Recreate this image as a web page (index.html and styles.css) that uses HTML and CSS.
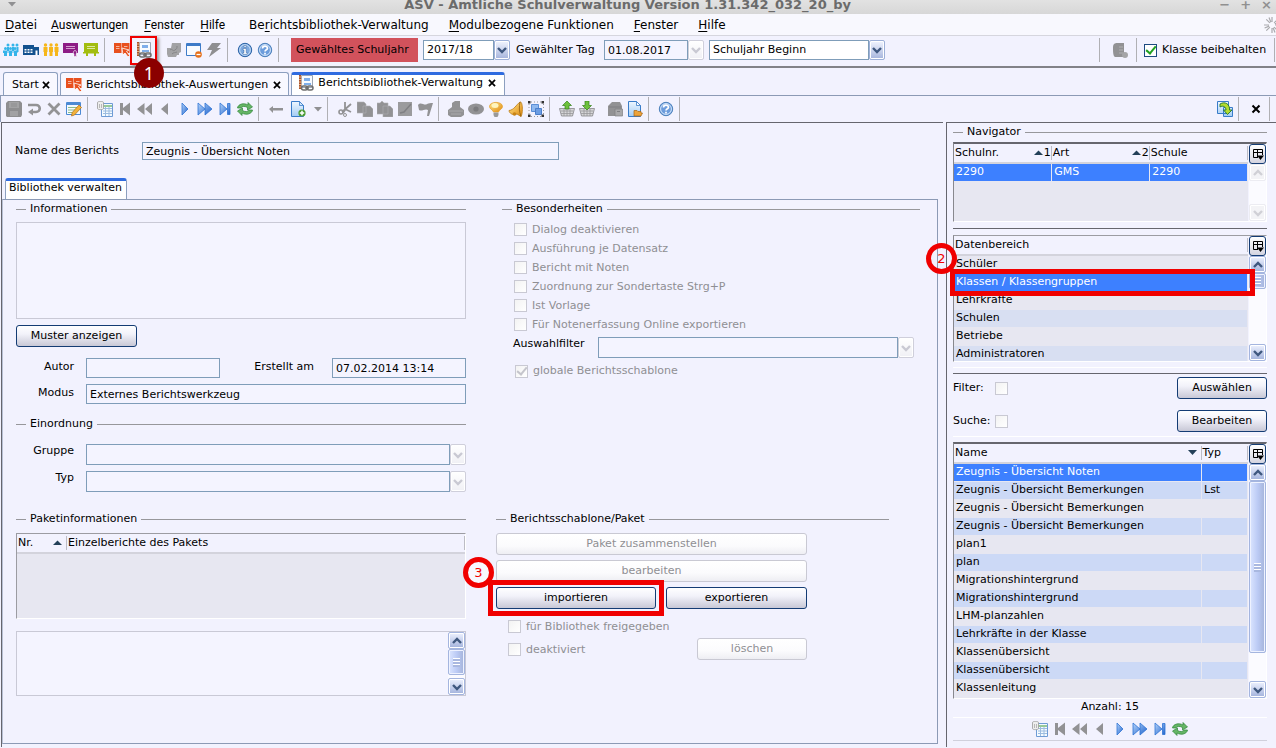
FILE: index.html
```html
<!DOCTYPE html>
<html lang="de">
<head>
<meta charset="utf-8">
<title>ASV - Amtliche Schulverwaltung</title>
<link rel="stylesheet" href="styles.css">
</head>
<body>
<svg class="sprite" aria-hidden="true">
  <defs>
    <linearGradient id="blueGrad" x1="0" y1="0" x2="1" y2="1"><stop offset="0" stop-color="#b5d4fa"/><stop offset="1" stop-color="#1f63cc"/></linearGradient>
    <linearGradient id="gold" x1="0" y1="0" x2="1" y2="1"><stop offset="0" stop-color="#ffe68a"/><stop offset="1" stop-color="#e08a10"/></linearGradient>
    <linearGradient id="pageGrad" x1="0" y1="0" x2="0" y2="1"><stop offset="0" stop-color="#eef7ff"/><stop offset="1" stop-color="#a3ccf4"/></linearGradient>
  </defs>
  <symbol id="people-blue" viewBox="0 0 16 16"><g fill="#35b4ea"><circle cx="5" cy="3" r="1.5"/><circle cx="10" cy="3" r="1.5"/><circle cx="14" cy="3" r="1.5"/><path d="M4 5h2v4h-2zM9 5h2v4h-2zM13.500 5h2v5h-2z"/><circle cx="2.500" cy="6.500" r="1.500"/><circle cx="7.500" cy="6.500" r="1.500"/><circle cx="12" cy="6.500" r="1.500"/><path d="M0 8.500h4.500v2.500H4v3H1v-3H0zM5.500 8.500H9.500v2.500H9v3H6v-3h-.5zM10.500 8.500h4v2.500H14v3h-3v-3h-.5z"/></g></symbol>
  <symbol id="school" viewBox="0 0 16 16"><path fill="#12518f" d="M0 3h11v2h5v8H0z"/><path fill="#fff" d="M1.500 7h2v1.500h-2zM4.500 7h2v1.500h-2zM7.500 7h2v1.500h-2zM1.500 9.500h2V11h-2zM4.500 9.500h2V11h-2zM7.500 9.500h2V11h-2zM12.500 8.500h2V13h-2z"/></symbol>
  <symbol id="people-gold" viewBox="0 0 16 16"><g fill="#f6b61a"><circle cx="2.500" cy="3" r="1.700"/><circle cx="8" cy="3" r="1.700"/><circle cx="13.500" cy="3" r="1.700"/><path d="M.5 5h4v5H4v4H1v-4H.5zM6 5h4v5h-.5v4h-3v-4H6zM11.500 5h4v5H15v4h-3v-4h-.5z"/></g></symbol>
  <symbol id="cert" viewBox="0 0 16 16"><path fill="#8d1c86" d="M0 1h15v10H0z"/><path stroke="#e6c4e4" stroke-width=".8" d="M3 4.500h9M3 6.500h9"/><path fill="#8d1c86" stroke="#fff" stroke-width=".6" d="M12 8.500a2 2 0 0 1 1 3.500l1 3-1.700-1-1.300 1v-3a2 2 0 0 1 1-3.500z"/></symbol>
  <symbol id="board" viewBox="0 0 16 16"><path fill="#a2bd10" d="M1 1h14v9H1zM0 10h16v1.500H0zM3 11h2v3H3zM11 11h2v3h-2z"/><path stroke="#edf3c6" stroke-width=".8" d="M4 4.500h8M4 6.500h8"/></symbol>
  <symbol id="book" viewBox="0 0 16 16"><path fill="#e8501e" d="M0 1h7.500v10H0zM8 1h7.500v10H8z"/><path stroke="#f9d2c4" stroke-width=".8" d="M2 4.500h3.500M2 6.500h3.500M10 4.500h3.500"/><path fill="#e8501e" stroke="#fff" stroke-width=".8" d="M8 6l7 2-2.500 1.300 3 4.200-1.500 1.500-3-4L9 13z"/></symbol>
  <symbol id="report" viewBox="0 0 16 16"><path fill="#f8fbff" stroke="#9aa5b4" d="M3.500.5h11v12h-11z"/><path fill="#a9502a" d="M1 0h2v14H1z"/><path stroke="#e4b186" d="M1 2h3M1 4.500h3M1 7h3M1 9.500h3M1 12h3"/><path fill="#7faeea" d="M6 3h6v3H6zM6 8h7v2H6z"/><g fill="none" stroke="#6d6d6d" stroke-width="1.500"><rect x="3.500" y="11" width="6" height="4" rx="2"/><rect x="9" y="11" width="6" height="4" rx="2"/><path d="M7 13h4"/></g></symbol>
  <symbol id="puzzle" viewBox="0 0 16 16"><path fill="#a2a2a4" d="M6 1h9v9l-2 1v2h-2l-1 2H2l-1-3V6h4z"/><path fill="none" stroke="#858587" d="M4 8c2-2 3 2 5 0s2-1 2-4M6 12c2-2 3-1 5-2"/></symbol>
  <symbol id="window" viewBox="0 0 16 16"><path fill="#f8fbff" stroke="#3d7bc8" d="M.5 1.500h14v12H.5z"/><path fill="#3d7bc8" d="M1 2h13v2H1z"/><circle cx="12.500" cy="12.500" r="3.300" fill="#e5701b"/><path stroke="#fff" stroke-width="1.300" d="M10.500 12.500h4"/></symbol>
  <symbol id="bolt" viewBox="0 0 16 16"><path fill="#8f8f91" d="M6 1h9l-4 5h4L3 15l3-7H1z"/></symbol>
  <symbol id="info" viewBox="0 0 16 16"><circle cx="8" cy="8" r="6.700" fill="#7eaae0" stroke="#2b62a5"/><circle cx="8" cy="8" r="5.300" fill="none" stroke="#d7e8fb" stroke-width=".8"/><path fill="#fff" stroke="#1c4c91" stroke-width=".4" d="M7 3.500h2.200v1.800H7zM6 6.500h3.200v4.200h1v1.600H6v-1.600h1V8H6z"/></symbol>
  <symbol id="help" viewBox="0 0 16 16"><circle cx="8" cy="8" r="6.700" fill="#6c9cdc" stroke="#4d81bb"/><circle cx="8" cy="8" r="5.400" fill="none" stroke="#d7e8fb"/><path fill="none" stroke="#fff" stroke-width="1.700" d="M5.500 6.500c0-3 5-3 5-.3 0 1.500-2.500 1.500-2.500 3.300M8 10.800v1.600"/></symbol>
  <symbol id="save" viewBox="0 0 16 16"><path fill="#8e8e90" d="M2 0h12l2 2v12l-1 2H1l-1-1V2z"/><path fill="#a2a2a4" d="M3 1h10v6H3zM4 10h8v5H4z"/><path stroke="#8e8e90" d="M5 3h6M5 5h6"/></symbol>
  <symbol id="undo" viewBox="0 0 16 16"><path fill="none" stroke="#929294" stroke-width="2.600" d="M2 4h8c5 0 5 7 0 7H6"/><path fill="#929294" d="M7 7.500v7L2 11z"/></symbol>
  <symbol id="cross" viewBox="0 0 16 16"><path stroke="#939395" stroke-width="2.800" d="M2.500 2.500l11 11M13.500 2.500l-11 11"/></symbol>
  <symbol id="edit" viewBox="0 0 16 16"><path fill="#f4f9ff" stroke="#4c8ad4" d="M.5 1.500h14v12H.5z"/><path fill="#4c8ad4" d="M1 2h13v2H1z"/><path stroke="#8bbd8a" d="M2 6.500h9M2 9h7M2 11.500h5"/><path fill="#f3b33a" stroke="#ad6c18" stroke-width=".7" d="M13 4l2.500 2.500-7 7.500-3 1 .7-3.500z"/></symbol>
  <symbol id="table" viewBox="0 0 16 16"><path fill="#f4faff" stroke="#6e9bd5" d="M4.500 2.500h11v13h-11z"/><path stroke="#78b878" stroke-width="1.500" d="M6 5h9"/><path stroke="#9cbce0" d="M6 7.500h9M6 10h9M6 12.500h9M8.500 6v9M12 6v9"/><path fill="#eee" stroke="#999" stroke-width=".8" d="M.5 1.500c0-1.500 6-1.500 6 0v6c0 1.500-6 1.500-6 0z"/><path stroke="#aaa" stroke-width=".8" d="M2.500 3v4M4.500 3v4"/></symbol>
  <symbol id="first" viewBox="0 0 16 16"><path fill="#929294" d="M3 2h3v5l7-5.500v13L6 9v5H3z"/></symbol>
  <symbol id="rewind" viewBox="0 0 16 16"><path fill="#929294" d="M7.500 2v12L0 8zM15 2v12L8 8z"/></symbol>
  <symbol id="prev" viewBox="0 0 16 16"><path fill="#929294" d="M11 2v12L4 8z"/></symbol>
  <symbol id="next" viewBox="0 0 16 16"><path fill="url(#blueGrad)" stroke="#2f74d4" stroke-width=".8" d="M5 2v12l6-6z"/></symbol>
  <symbol id="forward" viewBox="0 0 16 16"><path fill="url(#blueGrad)" stroke="#2f74d4" stroke-width=".8" d="M1 2v12l7-6zM8 2v12l7-6z"/></symbol>
  <symbol id="last" viewBox="0 0 16 16"><path fill="url(#blueGrad)" stroke="#2f74d4" stroke-width=".8" d="M3 2v12l7-6zM10.500 2.500h2.500v11h-2.500z"/></symbol>
  <symbol id="refresh" viewBox="0 0 16 16"><path fill="#65b565" stroke="#2d8436" stroke-width=".7" d="M.5 7C1 3 7 1.500 11 4V1.500L15.500 6l-5 3V6.500C8 5 5 5 4 7zM15.500 9c-.5 4-6.500 5.500-10.500 3v2.500L.5 10l5-3v2.500C8 11 11 11 12 9z"/></symbol>
  <symbol id="back" viewBox="0 0 16 16"><path fill="#929294" d="M1 8l4-3v2h10v2.500H5V12z"/></symbol>
  <symbol id="newdoc" viewBox="0 0 16 16"><path fill="url(#pageGrad)" stroke="#397cc9" d="M1.500.5h8l4 4v11h-12z"/><path fill="#cfe5fb" stroke="#397cc9" stroke-width=".8" d="M9.500.5v4h4z"/><circle cx="12" cy="12" r="3.600" fill="#4a9c31"/><path stroke="#fff" stroke-width="1.500" d="M9.800 12h4.400M12 9.800v4.400"/></symbol>
  <symbol id="down" viewBox="0 0 16 16"><path fill="#909092" d="M4 6h8L8 10.500z"/></symbol>
  <symbol id="scissors" viewBox="0 0 16 16"><path fill="none" stroke="#929294" stroke-width="1.800" d="M8 1v8l-2 3M14 3L5 11M8 8l6 3"/><circle cx="4" cy="11" r="2" fill="none" stroke="#929294" stroke-width="1.600"/><circle cx="8" cy="14" r="1.500" fill="none" stroke="#929294"/></symbol>
  <symbol id="copy" viewBox="0 0 16 16"><path fill="#929294" stroke="#b0b0b2" stroke-width=".6" d="M0 1h7l2 2v9H0zM6 5h7l3 3v8H6z"/></symbol>
  <symbol id="paste" viewBox="0 0 16 16"><path fill="#929294" stroke="#b0b0b2" stroke-width=".6" d="M0 2h3l2-2 2 2h4v11H0zM6 5h7l3 3v8H6z"/></symbol>
  <symbol id="editgray" viewBox="0 0 16 16"><path fill="#9b9b9d" d="M1 1h14v14H1z"/><path fill="none" stroke="#808083" stroke-width="1.500" d="M3 12l4-1 7-8"/></symbol>
  <symbol id="flag" viewBox="0 0 16 16"><path fill="#929294" d="M1 4c3-4 6 1 9-1 2-1 3-1 6-1l-4 13h-2l1-6c-3-2-6 2-9 0z"/></symbol>
  <symbol id="printer" viewBox="0 0 16 16"><path fill="#929294" d="M4 6V2l3-2h5v6l4 3v5l-3 2H3l-3-2V9z"/><path stroke="#a9a9ab" d="M1 10h14M3 13h10"/></symbol>
  <symbol id="eye" viewBox="0 0 16 16"><ellipse cx="8" cy="8" rx="8" ry="5.600" fill="#929294"/><circle cx="8" cy="8" r="2.600" fill="#7b7b7d"/></symbol>
  <symbol id="bulb" viewBox="0 0 16 16"><path fill="url(#gold)" stroke="#e29b20" stroke-width=".7" d="M5.500 11C5 9 1.500 8 1.500 5.500 1.500 0 14.500 0 14.500 5.500 14.500 8 11 9 10.500 11z"/><ellipse cx="7" cy="4.500" rx="3.500" ry="2.500" fill="#fff5bd"/><path fill="#999" d="M5.500 11.500h5V14l-1 2h-3l-1-2z"/></symbol>
  <symbol id="bell" viewBox="0 0 16 16"><path fill="url(#gold)" stroke="#b97912" stroke-width=".8" d="M12 1c3-1 3 12 1 14.500L9 13c-4 2-8-1-8-3.500C6 9 8 4 12 1z"/><path fill="none" stroke="#8b5a0c" stroke-width=".8" d="M12 1c-1 5-1 9 1 14.500"/><circle cx="6.500" cy="13" r="1.800" fill="#c88416"/></symbol>
  <symbol id="group" viewBox="0 0 16 16"><path fill="#8fb9ef" stroke="#5a8ed6" d="M3.500 3.500h7v7h-7z"/><path fill="#6c9de3" stroke="#4a7fcb" d="M7.500 7.500h6v6h-6z"/><path stroke="#999" stroke-dasharray="1 2" d="M3 1h10M3 15.500h10M1 3v10M15.500 3v10"/><path fill="#333" d="M0 0h2.500v2.500H0zM13.500 0H16v2.500h-2.500zM0 13.500h2.500V16H0zM13.500 13.500H16V16h-2.500z"/></symbol>
  <symbol id="basket-up" viewBox="0 0 16 16"><path fill="#d6d6d8" stroke="#858588" stroke-width=".8" d="M.5 7.500h15l-2 7.500h-11z"/><path stroke="#98989b" stroke-width=".8" d="M2 10h12M2 12.500h12M5 8v7M8 8v7M11 8v7"/><path fill="#6dc13c" stroke="#35811b" stroke-width=".7" d="M8 0l4.500 4.500h-2.500V8H6V4.500H3.500z"/></symbol>
  <symbol id="basket-down" viewBox="0 0 16 16"><path fill="#d6d6d8" stroke="#858588" stroke-width=".8" d="M.5 7.500h15l-2 7.500h-11z"/><path stroke="#98989b" stroke-width=".8" d="M2 10h12M2 12.500h12M5 8v7M8 8v7M11 8v7"/><path fill="#6dc13c" stroke="#35811b" stroke-width=".7" d="M8 9l4.500-4.500h-2.500V0H6v4.500H3.500z"/></symbol>
  <symbol id="cabinet" viewBox="0 0 16 16"><path fill="#929294" d="M1 5l4-4h8l2 4v10H1z"/><path fill="#a8a8aa" stroke="#7f7f82" stroke-width=".7" d="M8 8h7.500v7H8z"/><path stroke="#7f7f82" d="M2 6h12M10 10.500h3"/></symbol>
  <symbol id="docfolder" viewBox="0 0 16 16"><path fill="url(#pageGrad)" stroke="#397cc9" d="M1.500.5h8l4 4v11h-12z"/><path fill="#fff" stroke="#397cc9" stroke-width=".8" d="M9.500.5v4h4z"/><path fill="#eda33a" stroke="#a86616" stroke-width=".7" d="M7 15V9.500h3l1 1h3v1.500h1.500L14 15z"/></symbol>
  <symbol id="swap" viewBox="0 0 16 16"><path fill="url(#pageGrad)" stroke="#397cc9" d="M.5.5h11v12H.5zM6.500 6.500h9v9h-9z"/><path fill="#b4dc2e" stroke="#23762e" stroke-width=".9" d="M3 3c5-3 10 0 9.500 6H15l-4.500 4.500L6.500 9H9c0-3-3-5-6-3z"/></symbol>
  <symbol id="building" viewBox="0 0 16 16"><path fill="#929294" d="M1 5c0-4 3-4 5-4h6v14H3c-2-1-2-5-2-10z"/><path stroke="#b0b0b2" d="M7 5h4M7 8h4M7 11h4"/><circle cx="13" cy="13" r="3" fill="#a5a5a7"/></symbol>
  <symbol id="close" viewBox="0 0 16 16"><path stroke="#000" stroke-width="2" d="M4.500 4.500l7 7M11.500 4.500l-7 7"/></symbol>
  <symbol id="chev-down" viewBox="0 0 12 12"><path fill="none" stroke="currentColor" stroke-width="2.400" d="M2 4l4 4 4-4"/></symbol>
  <symbol id="chev-up" viewBox="0 0 12 12"><path fill="none" stroke="currentColor" stroke-width="2.400" d="M2 8l4-4 4 4"/></symbol>
  <symbol id="sort-up" viewBox="0 0 9 6"><path fill="#234058" d="M0 5h9L4.500.5z"/></symbol>
  <symbol id="sort-down" viewBox="0 0 9 6"><path fill="#234058" d="M0 0h9L4.500 5z"/></symbol>
  <symbol id="colctl" viewBox="0 0 12 12"><path fill="none" stroke="#000" d="M10.500 7V1.500h-9v8H6M1 4.500h10M5.500 1v8"/><path fill="#000" d="M5 7.500h7L8.500 12z"/></symbol>
  <symbol id="spinner" viewBox="0 0 16 16"><path stroke="#aaaaae" stroke-width="1.200" d="M8 0v5M8 11v5M0 8h5M11 8h5M2.300 2.300l3.600 3.600M10.100 10.100l3.600 3.600M2.300 13.700l3.600-3.600M10.100 5.900l3.600-3.600M5 .6l1.900 4.600M9.100 10.800l1.900 4.600M.6 11l4.600-1.900M10.800 6.900l4.600-1.900"/></symbol>
</svg>

<header class="titlebar">
  <svg class="title-menu"><use href="#down"/></svg>
  <h1>ASV - Amtliche Schulverwaltung Version 1.31.342_032_20_by</h1>
  <div class="window-controls" aria-hidden="true"><span>−</span><span>+</span><span>×</span></div>
</header>

<nav class="menubar">
  <a href="#"><u>D</u>atei</a>
  <span class="menu-alt"><a href="#"><u>A</u>uswertungen</a><a href="#"><u>F</u>enster</a><a href="#"><u>H</u>ilfe</a></span>
  <a href="#">Be<u>r</u>ichtsbibliothek-Verwaltung</a>
  <a href="#"><u>M</u>odulbezogene Funktionen</a>
  <a href="#"><u>F</u>enster</a>
  <a href="#"><u>H</u>ilfe</a>
  <svg class="spinner"><use href="#spinner"/></svg>
</nav>

<div class="toolbar main-toolbar">
  <button class="tool" aria-label="Schüler"><svg><use href="#people-blue"/></svg></button>
  <button class="tool" aria-label="Schulen"><svg><use href="#school"/></svg></button>
  <button class="tool" aria-label="Klassen"><svg><use href="#people-gold"/></svg></button>
  <button class="tool" aria-label="Zeugnisse"><svg><use href="#cert"/></svg></button>
  <button class="tool" aria-label="Unterricht"><svg><use href="#board"/></svg></button>
  <i class="sep"></i>
  <button class="tool" aria-label="Auswertungen"><svg><use href="#book"/></svg></button>
  <span class="marked-tool"><button class="tool" aria-label="Berichtsbibliothek"><svg><use href="#report"/></svg></button><b class="step-one">1</b></span>
  <button class="tool" aria-label="Module"><svg><use href="#puzzle"/></svg></button>
  <button class="tool" aria-label="Fenster schließen"><svg><use href="#window"/></svg></button>
  <button class="tool" aria-label="Schnellzugriff"><svg><use href="#bolt"/></svg></button>
  <i class="sep"></i>
  <button class="tool" aria-label="Info"><svg><use href="#info"/></svg></button>
  <button class="tool" aria-label="Hilfe"><svg><use href="#help"/></svg></button>
  <i class="sep"></i>
  <label class="year-label" for="year">Gewähltes Schuljahr</label>
  <span class="combo year"><select id="year"><option>2017/18</option></select><span class="arrow"><svg><use href="#chev-down"/></svg></span></span>
  <label class="day-label" for="day">Gewählter Tag</label>
  <span class="combo day off"><input id="day" value="01.08.2017" readonly><span class="arrow"><svg><use href="#chev-down"/></svg></span></span>
  <span class="combo period"><select aria-label="Zeitpunkt"><option>Schuljahr Beginn</option></select><span class="arrow"><svg><use href="#chev-down"/></svg></span></span>
  <span class="toolbar-end">
    <i class="sep"></i>
    <button class="tool roomy" aria-label="Ablage"><svg><use href="#building"/></svg></button>
    <i class="sep"></i>
    <label class="check keep"><input type="checkbox" checked>Klasse beibehalten</label>
    <i class="sep last"></i>
  </span>
</div>

<div class="tabs">
  <div class="tab">Start<button class="tab-close" aria-label="Schließen"><svg><use href="#close"/></svg></button></div>
  <div class="tab"><svg class="tab-icon"><use href="#book"/></svg>Berichtsbibliothek-Auswertungen<button class="tab-close" aria-label="Schließen"><svg><use href="#close"/></svg></button></div>
  <div class="tab active"><svg class="tab-icon"><use href="#report"/></svg>Berichtsbibliothek-Verwaltung<button class="tab-close" aria-label="Schließen"><svg><use href="#close"/></svg></button></div>
</div>

<div class="toolbar edit-toolbar">
  <button class="tool" aria-label="Speichern"><svg><use href="#save"/></svg></button>
  <button class="tool" aria-label="Rückgängig"><svg><use href="#undo"/></svg></button>
  <button class="tool" aria-label="Löschen"><svg><use href="#cross"/></svg></button>
  <button class="tool" aria-label="Ändern"><svg><use href="#edit"/></svg></button>
  <i class="sep"></i>
  <button class="tool" aria-label="Tabelle"><svg><use href="#table"/></svg></button>
  <button class="tool" aria-label="Erster"><svg><use href="#first"/></svg></button>
  <button class="tool" aria-label="Zurück blättern"><svg><use href="#rewind"/></svg></button>
  <button class="tool" aria-label="Voriger"><svg><use href="#prev"/></svg></button>
  <button class="tool" aria-label="Nächster"><svg><use href="#next"/></svg></button>
  <button class="tool" aria-label="Vor blättern"><svg><use href="#forward"/></svg></button>
  <button class="tool" aria-label="Letzter"><svg><use href="#last"/></svg></button>
  <button class="tool" aria-label="Aktualisieren"><svg><use href="#refresh"/></svg></button>
  <i class="sep"></i>
  <button class="tool" aria-label="Zurück"><svg><use href="#back"/></svg></button>
  <button class="tool wide" aria-label="Neu"><svg><use href="#newdoc"/></svg></button>
  <button class="tool slim" aria-label="Neu, Auswahl"><svg><use href="#down"/></svg></button>
  <i class="sep"></i>
  <button class="tool" aria-label="Ausschneiden"><svg><use href="#scissors"/></svg></button>
  <button class="tool" aria-label="Kopieren"><svg><use href="#copy"/></svg></button>
  <button class="tool" aria-label="Einfügen"><svg><use href="#paste"/></svg></button>
  <button class="tool" aria-label="Bearbeiten"><svg><use href="#editgray"/></svg></button>
  <button class="tool" aria-label="Markieren"><svg><use href="#flag"/></svg></button>
  <i class="sep"></i>
  <button class="tool" aria-label="Drucken"><svg><use href="#printer"/></svg></button>
  <button class="tool" aria-label="Vorschau"><svg><use href="#eye"/></svg></button>
  <button class="tool" aria-label="Hinweis"><svg><use href="#bulb"/></svg></button>
  <button class="tool" aria-label="Erinnerung"><svg><use href="#bell"/></svg></button>
  <button class="tool" aria-label="Gruppieren"><svg><use href="#group"/></svg></button>
  <i class="sep"></i>
  <button class="tool" aria-label="Aus Korb"><svg><use href="#basket-up"/></svg></button>
  <button class="tool" aria-label="In Korb"><svg><use href="#basket-down"/></svg></button>
  <button class="tool spaced" aria-label="Archiv"><svg><use href="#cabinet"/></svg></button>
  <button class="tool" aria-label="Öffnen"><svg><use href="#docfolder"/></svg></button>
  <i class="sep"></i>
  <button class="tool" aria-label="Hilfe"><svg><use href="#help"/></svg></button>
  <i class="sep"></i>
  <span class="toolbar-end">
    <button class="tool" aria-label="Wechseln"><svg><use href="#swap"/></svg></button>
    <i class="sep"></i>
    <button class="tool" aria-label="Schließen"><svg><use href="#close"/></svg></button>
    <i class="sep last"></i>
  </span>
</div>

<main class="workspace">
  <section class="editor">
    <div class="name-row">
      <label for="name">Name des Berichts</label>
      <input class="field" id="name" value="Zeugnis - Übersicht Noten" readonly>
    </div>
    <div class="inner-tabs"><button class="inner-tab">Bibliothek verwalten</button></div>
    <div class="panel">
      <div class="column">
        <h2 class="section">Informationen</h2>
        <textarea class="info-text" aria-label="Informationen" readonly></textarea>
        <button class="btn sample">Muster anzeigen</button>
        <div class="form-row">
          <label for="author">Autor</label><input class="field" id="author" readonly>
          <label class="created-label" for="created">Erstellt am</label><input class="field" id="created" value="07.02.2014 13:14" readonly>
        </div>
        <div class="form-row full">
          <label for="mode">Modus</label><input class="field" id="mode" value="Externes Berichtswerkzeug" readonly>
        </div>
        <h2 class="section sorting">Einordnung</h2>
        <div class="form-row full">
          <label for="grp">Gruppe</label><span class="combo off"><select id="grp" disabled></select><span class="arrow"><svg><use href="#chev-down"/></svg></span></span>
        </div>
        <div class="form-row full">
          <label for="typ">Typ</label><span class="combo off"><select id="typ" disabled></select><span class="arrow"><svg><use href="#chev-down"/></svg></span></span>
        </div>
        <h2 class="section package">Paketinformationen</h2>
        <div class="grid-box package-box">
          <table class="grid">
            <colgroup><col class="col-nr"><col></colgroup>
            <thead><tr><th><span>Nr.<svg class="sort"><use href="#sort-up"/></svg></span></th><th><span>Einzelberichte des Pakets</span></th></tr></thead>
          </table>
        </div>
        <div class="note-box">
          <textarea aria-label="Bemerkung" readonly></textarea>
          <div class="scroll"><button aria-label="Nach oben"><svg><use href="#chev-up"/></svg></button><span class="thumb short"></span><button class="end" aria-label="Nach unten"><svg><use href="#chev-down"/></svg></button></div>
        </div>
      </div>
      <div class="column">
        <div class="specials">
          <h2 class="section">Besonderheiten</h2>
          <div class="checks">
            <label class="check"><input type="checkbox" disabled>Dialog deaktivieren</label>
            <label class="check"><input type="checkbox" disabled>Ausführung je Datensatz</label>
            <label class="check"><input type="checkbox" disabled>Bericht mit Noten</label>
            <label class="check"><input type="checkbox" disabled>Zuordnung zur Sondertaste Strg+P</label>
            <label class="check"><input type="checkbox" disabled>Ist Vorlage</label>
            <label class="check"><input type="checkbox" disabled>Für Notenerfassung Online exportieren</label>
          </div>
          <div class="filter-row"><label for="sel">Auswahlfilter</label><span class="combo off"><select id="sel" disabled></select><span class="arrow"><svg><use href="#chev-down"/></svg></span></span></div>
          <label class="check global"><input type="checkbox" checked disabled>globale Berichtsschablone</label>
        </div>
        <div class="template">
          <h2 class="section">Berichtsschablone/Paket</h2>
          <div class="actions">
            <button class="btn span" disabled>Paket zusammenstellen</button>
            <button class="btn span" disabled>bearbeiten</button>
            <span class="marked-import"><button class="btn">importieren</button><b class="step">3</b></span>
            <button class="btn">exportieren</button>
          </div>
          <div class="release">
            <div class="checks">
              <label class="check"><input type="checkbox" disabled>für Bibliothek freigegeben</label>
              <label class="check"><input type="checkbox" disabled>deaktiviert</label>
            </div>
            <button class="btn delete" disabled>löschen</button>
          </div>
        </div>
      </div>
    </div>
  </section>

  <aside class="navigator">
    <h2 class="section">Navigator</h2>
    <div class="list school-list">
      <div class="grid-box">
        <table class="grid">
          <colgroup><col><col><col></colgroup>
          <thead><tr><th><span>Schulnr.<span class="order"><svg class="sort"><use href="#sort-up"/></svg>1</span></span></th><th><span>Art<span class="order"><svg class="sort"><use href="#sort-up"/></svg>2</span></span></th><th><span>Schule</span></th></tr></thead>
          <tbody><tr class="sel"><td>2290</td><td>GMS</td><td>2290</td></tr></tbody>
        </table>
      </div>
      <div class="rail"><button class="colctl" aria-label="Spalten"><svg><use href="#colctl"/></svg></button><div class="scroll off"><button disabled aria-label="Nach oben"><svg><use href="#chev-up"/></svg></button><button class="end" disabled aria-label="Nach unten"><svg><use href="#chev-down"/></svg></button></div></div>
    </div>
    <div class="area-frame">
      <div class="list area-list">
        <div class="grid-box">
          <table class="grid">
            <thead><tr><th><span>Datenbereich</span></th></tr></thead>
            <tbody>
              <tr><td>Schüler</td></tr>
              <tr class="sel"><td>Klassen / Klassengruppen</td></tr>
              <tr><td>Lehrkräfte</td></tr>
              <tr><td>Schulen</td></tr>
              <tr><td>Betriebe</td></tr>
              <tr><td>Administratoren</td></tr>
            </tbody>
          </table>
        </div>
        <div class="rail"><button class="colctl" aria-label="Spalten"><svg><use href="#colctl"/></svg></button><div class="scroll"><button aria-label="Nach oben"><svg><use href="#chev-up"/></svg></button><span class="thumb tiny"></span><button class="end" aria-label="Nach unten"><svg><use href="#chev-down"/></svg></button></div></div>
      </div>
      <div class="row-mark"><b class="step">2</b></div>
    </div>
    <div class="filters">
      <div class="filter-line"><label for="flt">Filter:</label><input id="flt" type="checkbox" disabled><button class="btn">Auswählen</button></div>
      <div class="filter-line"><label for="sch">Suche:</label><input id="sch" type="checkbox" disabled><button class="btn">Bearbeiten</button></div>
    </div>
    <div class="list name-list">
      <div class="grid-box">
        <table class="grid">
          <colgroup><col><col class="col-typ"></colgroup>
          <thead><tr><th><span>Name<svg class="sort"><use href="#sort-down"/></svg></span></th><th><span>Typ</span></th></tr></thead>
          <tbody>
            <tr class="sel"><td>Zeugnis - Übersicht Noten</td><td></td></tr>
            <tr><td>Zeugnis - Übersicht Bemerkungen</td><td>Lst</td></tr>
            <tr><td>Zeugnis - Übersicht Bemerkungen</td><td></td></tr>
            <tr><td>Zeugnis - Übersicht Bemerkungen</td><td></td></tr>
            <tr><td>plan1</td><td></td></tr>
            <tr><td>plan</td><td></td></tr>
            <tr><td>Migrationshintergrund</td><td></td></tr>
            <tr><td>Migrationshintergrund</td><td></td></tr>
            <tr><td>LHM-planzahlen</td><td></td></tr>
            <tr><td>Lehrkräfte in der Klasse</td><td></td></tr>
            <tr><td>Klassenübersicht</td><td></td></tr>
            <tr><td>Klassenübersicht</td><td></td></tr>
            <tr><td>Klassenleitung</td><td></td></tr>
          </tbody>
        </table>
      </div>
      <div class="rail"><button class="colctl" aria-label="Spalten"><svg><use href="#colctl"/></svg></button><div class="scroll"><button aria-label="Nach oben"><svg><use href="#chev-up"/></svg></button><span class="thumb tall"></span><button class="end" aria-label="Nach unten"><svg><use href="#chev-down"/></svg></button></div></div>
    </div>
    <p class="count">Anzahl: 15</p>
    <div class="pager">
      <button class="tool" aria-label="Tabelle"><svg><use href="#table"/></svg></button>
      <button class="tool" aria-label="Erster"><svg><use href="#first"/></svg></button>
      <button class="tool" aria-label="Zurück blättern"><svg><use href="#rewind"/></svg></button>
      <button class="tool" aria-label="Voriger"><svg><use href="#prev"/></svg></button>
      <button class="tool" aria-label="Nächster"><svg><use href="#next"/></svg></button>
      <button class="tool" aria-label="Vor blättern"><svg><use href="#forward"/></svg></button>
      <button class="tool" aria-label="Letzter"><svg><use href="#last"/></svg></button>
      <button class="tool" aria-label="Aktualisieren"><svg><use href="#refresh"/></svg></button>
    </div>
  </aside>
</main>
</body>
</html>
```
FILE: styles.css
```css
* { box-sizing: border-box; }
body {
  margin: 0;
  min-height: 100vh;
  display: flex;
  flex-direction: column;
  background: #f2f2fe;
  color: #000;
  font: 11px/14px "DejaVu Sans", sans-serif;
}
button, input, select, textarea { font: inherit; color: inherit; margin: 0; }
h1, h2, p { margin: 0; font: inherit; }
.sprite { position: absolute; width: 0; height: 0; }

/* Title and menu */
.titlebar {
  height: 14px;
  display: flex;
  align-items: center;
  justify-content: space-between;
  padding: 0 4px;
  overflow: hidden;
  background: linear-gradient(#e2e2e2, #d7d7d7);
  color: #6b6b6b;
}
.titlebar h1 { font-size: 13px; font-weight: bold; line-height: 14px; margin-bottom: 5px; padding-left: 16px; }
.title-menu { width: 16px; height: 16px; margin-bottom: 6px; }
.window-controls { display: flex; gap: 10px; font-size: 13px; font-weight: bold; line-height: 14px; margin-bottom: 5px; color: #909090; }
.menubar {
  height: 22px;
  display: flex;
  align-items: center;
  gap: 20px;
  padding-left: 5px;
  background: #f8f8fe;
  border-bottom: 1px solid #d6d6de;
  font-size: 12px;
  line-height: 16px;
}
.menubar a { color: #000; text-decoration: none; }
.menubar u { text-underline-offset: 2px; }
.menu-alt { display: flex; gap: 16px; margin: 0 4px 0 -6px; font-family: Roboto, sans-serif; }
.spinner { width: 16px; height: 16px; margin-left: auto; margin-right: -4px; }

/* Toolbars */
.toolbar { display: flex; align-items: center; }
.main-toolbar { height: 32px; padding: 0 1px 2px; border-bottom: 2px solid #828288; }
.edit-toolbar { height: 26px; padding: 0 6px 0 3px; border-left: 1px solid #8c9ab5; }
.tool { width: 20px; height: 20px; flex: none; padding: 0; border: 0; background: none; display: grid; place-items: center; }
.tool svg { width: 16px; height: 16px; }
.tool.wide { width: 24px; }
.tool.slim { width: 14px; }
.tool.spaced { margin-left: 8px; }
.tool.roomy { margin: 0 3px; }
.sep { flex: none; width: 1px; height: 24px; margin: 0 7px 0 3px; background: #b0b0b4; }
.sep.last { margin-right: 0; }
.toolbar-end { margin-left: auto; display: flex; align-items: center; }
.marked-tool { position: relative; z-index: 3; display: flex; justify-content: center; align-items: center; width: 27px; height: 29px; margin: 0 7px 0 -2px; border: 2px solid #f00000; box-shadow: 2px 2px 3px #999; }
.step-one { position: absolute; top: 20px; left: 2px; width: 30px; height: 30px; border-radius: 50%; background: #8b0000; color: #fff; font: 18px/30px "Noto Sans", sans-serif; text-align: center; }
.year-label, .day-label, .keep { flex: none; }
.year-label { width: 127px; padding: 5px; margin: 0 5px; background: #d2525c; }
.day-label { width: 88px; margin: 0 0 0 6px; }
.year { width: 87px; }
.day { width: 100px; margin-right: 5px; }
.period { width: 176px; }
.main-toolbar .combo { height: 20px; }
.keep { min-width: 125px; margin-right: 2px; }

/* Controls */
.combo { display: flex; min-width: 0; height: 22px; }
.combo select, .combo input { flex: 1; min-width: 0; appearance: none; height: 100%; padding: 0 3px; border: 1px solid #7f9db9; border-radius: 0; background: #fff; opacity: 1; color: #000; }
.combo.off select, .combo.off input { background: #f4f4ff; }
.arrow { flex: none; width: 16px; display: grid; place-items: center; border: 1px solid #9db0d8; border-radius: 2px; color: #3f587f; background: linear-gradient(#f2f5ff, #a5b4dc); box-shadow: inset 0 0 0 1px #fff; }
.arrow svg { width: 12px; height: 12px; }
.combo.off .arrow { border-color: #cfcfdb; color: #c9c9d3; background: linear-gradient(#fff, #f0f0f5); }
.field { min-width: 0; height: 20px; padding: 0 3px; border: 1px solid #7f9db9; background: #f4f4ff; }
textarea { display: block; resize: none; border: 1px solid #c9c9d6; background: #f4f4ff; padding: 2px; }
.btn { min-width: 0; height: 22px; padding: 0 8px; border: 1px solid #143c74; border-radius: 3px; background: linear-gradient(#fff, #f2f2fa 40%, #c8c8d6); text-align: center; }
.btn:disabled { border-color: #c9c9d3; color: #8f8f93; background: linear-gradient(#fff, #fbfbfd 60%, #eeeef3); }
input[type="checkbox"] { appearance: none; flex: none; width: 13px; height: 13px; border: 1px solid #1c4a80; background: #fff; display: grid; place-items: center; }
input[type="checkbox"]:disabled { border-color: #c9c9d3; background: linear-gradient(135deg, #f3f3f3, #fff); }
input[type="checkbox"]:checked::before { content: ""; width: 8px; height: 4px; margin-bottom: 3px; border: solid #21a121; border-width: 0 0 2px 2px; transform: rotate(-50deg); }
input[type="checkbox"]:checked:disabled::before { border-color: #c5c5cc; }
.check { display: flex; align-items: center; gap: 5px; }
.check:has(input:disabled) { color: #8f8f93; }

/* Tabs */
.tabs { display: flex; gap: 2px; height: 28px; padding: 4px 0 0 3px; border-bottom: 1px solid #8c9ab5; }
.tab { display: flex; align-items: center; padding: 2px 4px 0 8px; border: 1px solid #8c9fbf; border-bottom: 0; border-radius: 3px 3px 0 0; background: #f8f8ff; white-space: nowrap; }
.tab:has(.tab-icon) { padding-left: 5px; }
.tab.active { padding: 0 5px 4px 6px; border-top: 3px solid #2f6be0; background: #fff; }
.tab-icon { width: 16px; height: 16px; margin-right: 4px; }
.tab-close { padding: 0; border: 0; background: none; display: flex; }
.tab:has(.tab-icon) .tab-close { margin-left: 2px; }
.tab-close svg { width: 14px; height: 14px; }

/* Workspace */
.workspace { flex: 1; display: grid; grid-template-columns: minmax(0, 942fr) minmax(0, 330fr); gap: 3px; padding-left: 1px; padding-bottom: 1px; border-bottom: 1px solid #8c9ab5; }
.editor { display: flex; flex-direction: column; padding: 19px 5px 3px 0; border: solid #66666e; border-width: 1px 0 0 1px; }
.name-row { display: grid; grid-template-columns: 127px minmax(0, 418fr) 380fr; align-items: center; padding-left: 13px; }
.name-row .field { height: 18px; }
.inner-tabs { padding: 18px 0 0 3px; display: flex; }
.inner-tab { height: 21px; padding: 0 4px 4px 3px; border: 1px solid #8c9fbf; border-top: 3px solid #2f6be0; border-bottom: 0; border-radius: 3px 3px 0 0; background: #fff; }
.panel { flex: 1; display: grid; grid-template-columns: minmax(0, 450fr) minmax(0, 424fr); gap: 30px; padding: 2px 17px 0 13px; border: 1px solid #8c9ab5; border-left-color: #b8c0d4; }
.column { display: flex; flex-direction: column; }
.section { display: flex; align-items: center; gap: 4px; height: 14px; }
.section::before, .section::after { content: ""; height: 1px; background: #97979b; }
.section::before { width: 10px; }
.section::after { flex: 1; }
.info-text { height: 97px; margin: 6px 0; }
.sample { align-self: flex-start; width: 121px; margin-bottom: 11px; }
.form-row { display: grid; grid-template-columns: 58px minmax(0, 134fr) 88px minmax(0, 134fr); column-gap: 12px; height: 20px; margin-bottom: 6px; }
.form-row.full { grid-template-columns: 58px minmax(0, 1fr); }
.form-row label { text-align: right; padding-top: 2px; }
.form-row .created-label { padding-right: 6px; }
.form-row:has(.combo) { height: 21px; }
.form-row:has(.combo) label { padding-top: 0; }
.form-row .combo, .filter-row .combo { height: 21px; }
.sorting { margin: 7px 0 13px; }
.package { margin: 14px 0 7px; }
.package-box { height: 86px; border: 1px solid #9c9ca2; border-right-color: #fff; border-bottom-color: #fff; }
.note-box { display: flex; height: 65px; margin-top: 12px; border: 1px solid #c9c9d6; }
.note-box textarea { flex: 1; min-width: 0; border: 0; }
.specials { height: 310px; padding: 0 0 0 6px; }
.specials .checks { padding: 4px 0 3px 12px; display: grid; grid-auto-rows: 19px; }
.filter-row { display: grid; grid-template-columns: 73px minmax(0, 1fr); column-gap: 12px; padding: 0 6px 0 11px; }
.global { margin-top: 6px; padding-left: 13px; }
.template .section { margin-right: 31px; }
.actions { display: grid; grid-template-columns: minmax(0, 160fr) minmax(0, 141fr); gap: 5px 10px; margin: 7px 113px 0 0; }
.span { grid-column: 1 / -1; }
.marked-import { position: relative; display: grid; }
.marked-import::after { content: ""; position: absolute; inset: -7px -8px; border: 5px solid #f00000; }
.step { position: absolute; z-index: 2; width: 31px; height: 31px; border: 5px solid #f00000; border-radius: 50%; color: #f00000; font-size: 13px; font-weight: normal; line-height: 21px; text-align: center; }
.marked-import .step { left: -33px; top: -30px; background: #f8f8ff; }
.release { display: flex; justify-content: space-between; align-items: flex-end; margin: 6px 113px 0 12px; }
.release .checks { display: grid; grid-auto-rows: 23px; }
.delete { width: 110px; margin-bottom: 1px; }

/* Tables */
.grid-box { min-width: 0; background: #e7e7f1; overflow: hidden; }
.grid { width: 100%; border-collapse: collapse; table-layout: fixed; }
.grid th { height: 19px; padding: 0; font-weight: normal; text-align: left; background: #f2f2fe; border-bottom: 2px solid #d3d3dc; }
.grid th > span { display: flex; align-items: center; height: 14px; padding-left: 1px; border-right: 1px solid #bcbcc4; }
.grid td { height: 18px; padding: 0 2px; border-bottom: 1px solid #e7e7f1; border-right: 1px solid #e7e7f1; white-space: nowrap; overflow: hidden; }
.grid tr:nth-child(even) td { background: #ccd9f6; }
.area-list tr:nth-child(even) td { background: #d8dff2; }
.grid tr.sel:nth-child(n) td { background: #3d80ff; color: #fff; }
.sort { width: 9px; height: 6px; margin-left: auto; margin-right: 4px; }
.order { display: flex; align-items: center; margin-left: auto; }
.order .sort { margin-right: 1px; }
.col-nr { width: 50px; }
.col-typ { width: 46px; }

/* Navigator */
.navigator { display: flex; flex-direction: column; padding: 2px 9px 6px 6px; border: solid #66666e; border-width: 1px 0 0 1px; }
.list { display: grid; grid-template-columns: minmax(0, 1fr) 17px; gap: 1px; border: 1px solid #fff; border-left-color: #88888e; }
.school-list { height: 80px; margin: 3px 0 6px; border-top: 2px solid #66666e; }
.area-frame { position: relative; padding: 6px 0 5px; border: solid #66666e; border-width: 1px 0; border-bottom-color: #fff; }
.area-list { height: 127px; border-top-color: #9c9ca2; }
.row-mark { position: absolute; top: 40px; left: -3px; right: 12px; height: 27px; border: 5px solid #f00000; z-index: 2; }
.row-mark .step { left: -29px; top: -31px; }
.rail { display: flex; flex-direction: column; }
.colctl { flex: none; height: 20px; width: 17px; padding: 0; border: 1px solid #143c74; border-radius: 3px; display: grid; place-items: center; background: linear-gradient(#fff, #d4d4e0); }
.colctl svg { width: 12px; height: 12px; }
.scroll { width: 17px; flex: none; display: flex; flex-direction: column; background: #fbfbff; }
.rail .scroll { flex: 1; }
.scroll button { height: 17px; flex: none; padding: 0; display: grid; place-items: center; border: 1px solid #a4b5df; border-radius: 2px; color: #3f587f; background: linear-gradient(#eef2ff, #a2b2dc); box-shadow: inset 0 0 0 1px #fff; }
.scroll svg { width: 12px; height: 12px; }
.scroll .end { margin-top: auto; }
.scroll.off button { color: #d0d0d6; border-color: #ececf2; background: #f3f3f6; }
.thumb { display: grid; place-items: center; border: 1px solid #a4b5df; border-radius: 2px; background: linear-gradient(90deg, #dbe5ff, #bccbf5 50%, #a4b3da); box-shadow: inset 0 0 0 1px #eef2ff; }
.thumb::before { content: ""; width: 7px; height: 9px; background: repeating-linear-gradient(#fff 0 1px, #a9b8e0 1px 3px); }
.short { height: 26px; }
.tiny { height: 16px; }
.tall { flex: 0 1 172px; }
.filters { display: grid; gap: 11px; margin: 5px 0; padding: 3px 0 4px; border: solid #66666e; border-width: 1px 0; border-bottom-color: #fff; }
.filter-line { display: grid; grid-template-columns: 42px 13px minmax(0, 1fr); align-items: center; }
.filter-line .btn { width: 90px; justify-self: end; }
.name-list { height: 257px; border-top: 2px solid #66666e; }
.count { margin-top: 1px; text-align: center; }
.pager { display: flex; justify-content: center; margin-top: 3px; padding: 1px 0; border-top: 1px solid #fff; border-bottom: 1px solid #d0d0dc; }
```
